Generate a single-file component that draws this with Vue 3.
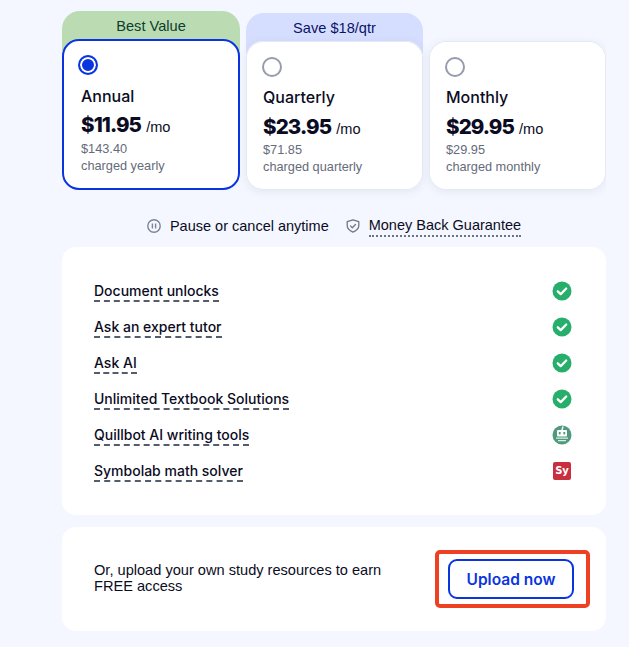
<template>
  <div class="page">
    <div class="plans">
      <div v-for="plan in plans" :key="plan.name" class="plan" :class="{ selected: plan.selected }">
        <div v-if="plan.banner" class="banner" :class="plan.bannerClass">{{ plan.banner }}</div>
        <div class="card">
          <span class="radio"></span>
          <div class="name">{{ plan.name }}</div>
          <div class="price"><b>{{ plan.price }}</b> <span>/mo</span></div>
          <div class="total">{{ plan.total }}</div>
          <div class="charged">{{ plan.charged }}</div>
        </div>
      </div>
    </div>

    <div class="notes">
      <svg class="note-icon" viewBox="0 0 14 14" fill="none" stroke="#7b8494" stroke-width="1.4">
        <circle cx="7" cy="7" r="6.2" />
        <path d="M5.4 4.6v4.8M8.6 4.6v4.8" />
      </svg>
      <span class="note-text">Pause or cancel anytime</span>
      <svg class="note-icon shield" viewBox="0 0 14 14" fill="none" stroke="#6f7785" stroke-width="1.3" stroke-linejoin="round" stroke-linecap="round">
        <path d="M7 .9l5.8 1.8v3.800c0 3.100-2.500 5.200-5.800 6.600-3.300-1.400-5.800-3.500-5.800-6.600V2.700z" />
        <path d="M4.500 6.900l1.800 1.800 3.200-3.200" />
      </svg>
      <span class="note-text dotted">Money Back Guarantee</span>
    </div>

    <div class="panel features">
      <div v-for="item in features" :key="item.label" class="feature">
        <span class="feature-label">{{ item.label }}</span>
        <svg v-if="item.icon === 'check'" class="feature-icon" viewBox="0 0 20 20">
          <circle cx="10" cy="10" r="9.5" fill="#27ae6b" />
          <path d="M5.800 10.300l2.900 2.800 5.500-5.600" fill="none" stroke="#fff" stroke-width="2.300" stroke-linecap="round" stroke-linejoin="round" />
        </svg>
        <svg v-else-if="item.icon === 'bot'" class="feature-icon" viewBox="0 0 20 20">
          <circle cx="10" cy="10" r="9.500" fill="#4f9a7c" />
          <path d="M11 1.500L10 5" stroke="#fff" stroke-width="1.400" />
          <rect x="5" y="5" width="10" height="6.500" rx="1" fill="#fff" />
          <rect x="6.800" y="7" width="1.800" height="2.400" fill="#4f9a7c" />
          <rect x="11.400" y="7" width="1.800" height="2.400" fill="#4f9a7c" />
          <path d="M4 13.200h12M6 15.600h8" stroke="#dcefe6" stroke-width="1.300" />
        </svg>
        <span v-else class="sy">Sy</span>
      </div>
    </div>

    <div class="panel upload">
      <p>Or, upload your own study resources to earn FREE access</p>
      <div class="upload-action">
        <button class="upload-btn">Upload now</button>
        <span class="highlight"></span>
      </div>
    </div>
  </div>
</template>

<script setup>
const plans = [
  { name: 'Annual', price: '$11.95', total: '$143.40', charged: 'charged yearly', banner: 'Best Value', bannerClass: 'green', selected: true },
  { name: 'Quarterly', price: '$23.95', total: '$71.85', charged: 'charged quarterly', banner: 'Save $18/qtr', bannerClass: 'blue' },
  { name: 'Monthly', price: '$29.95', total: '$29.95', charged: 'charged monthly' },
];

const features = [
  { label: 'Document unlocks', icon: 'check' },
  { label: 'Ask an expert tutor', icon: 'check' },
  { label: 'Ask AI', icon: 'check' },
  { label: 'Unlimited Textbook Solutions', icon: 'check' },
  { label: 'Quillbot AI writing tools', icon: 'bot' },
  { label: 'Symbolab math solver', icon: 'sy' },
];
</script>

<style>
html, body {
  background: #f4f7ff;
}
</style>

<style scoped>
.page {
  width: 544px;
  height: 647px;
  box-sizing: border-box;
  margin-left: 62px;
  padding-top: 11px;
  font-family: "Liberation Sans", Arial, sans-serif;
  color: #0b0c24;
  overflow: hidden;
}

.plans {
  display: flex;
  align-items: flex-end;
  gap: 6px;
  height: 179px;
}

.plan {
  flex: 0 0 177px;
  display: flex;
  flex-direction: column;
}

.plan.selected {
  flex-basis: 178px;
}

.banner {
  height: 40px;
  margin-bottom: -12px;
  padding-top: 6px;
  box-sizing: border-box;
  border-radius: 18px 18px 0 0;
  text-align: center;
  font-size: 14.6px;
  line-height: 18px;
}

.green {
  background: #bbdcb3;
  color: #0c3d2e;
}

.blue {
  background: #d6deff;
  color: #0b1466;
  height: 41px;
  margin-bottom: -13px;
}

.card {
  position: relative;
  height: 149px;
  box-sizing: border-box;
  padding: 16px 17px 0;
  background: #fff;
  border-radius: 17px;
  box-shadow: inset 0 0 0 1px #e6e9f3, 0 2px 10px rgba(60, 75, 130, 0.09);
}

.selected .card {
  height: 151px;
  padding-top: 14px;
  border: 2px solid #0a34e0;
  box-shadow: none;
}

.radio {
  display: block;
  width: 20px;
  height: 20px;
  margin-left: -1px;
  box-sizing: border-box;
  border: 2px solid #959cab;
  border-radius: 50%;
}

.selected .radio {
  margin-left: -3px;
  border-color: #0a34e0;
  background: #0a34e0;
  box-shadow: inset 0 0 0 2px #fff;
}

.name {
  margin-top: 10px;
  font-family: Inter, "Liberation Sans", sans-serif;
  font-size: 16px;
  font-weight: 500;
  line-height: 20px;
}

.selected .name {
  margin-top: 11px;
}

.price {
  margin-top: 8px;
  font-size: 14.6px;
  line-height: 24px;
  white-space: nowrap;
}

.selected .price {
  margin-top: 7px;
}

.price b {
  font-family: Inter, "Liberation Sans", sans-serif;
  font-size: 20.5px;
  font-weight: 800;
  letter-spacing: -0.9px;
  margin-right: 1px;
}

.total,
.charged {
  font-size: 12.75px;
  line-height: 17px;
  color: #646b7a;
}

.selected .total {
  margin-top: 1px;
}

.notes {
  display: flex;
  align-items: center;
  justify-content: center;
  height: 22px;
  margin-top: 25px;
  font-size: 14.5px;
}

.note-icon {
  width: 14px;
  height: 14px;
  margin-right: 9px;
}

.shield {
  margin-left: 17px;
  margin-right: 9px;
}

.note-text {
  line-height: 19px;
}

.dotted {
  border-bottom: 2px dotted #6c7380;
}

.panel {
  background: #fff;
  border-radius: 14px;
}

.features {
  box-sizing: border-box;
  height: 268px;
  margin-top: 10px;
  padding: 27px 32px 0;
}

.feature {
  display: flex;
  align-items: center;
  justify-content: space-between;
  height: 36px;
}

.feature-label {
  font-family: Inter, "Liberation Sans", sans-serif;
  font-size: 14px;
  font-weight: 500;
  line-height: 18px;
  border-bottom: 2px dashed #555c6b;
}

.feature-icon {
  width: 20px;
  height: 20px;
  margin-right: 2px;
  margin-bottom: 2px;
}

.sy {
  width: 18px;
  height: 18px;
  margin-right: 3px;
  margin-bottom: 2px;
  border-radius: 2px;
  background: #c9303f;
  color: #fff;
  font-family: "DejaVu Sans", sans-serif;
  font-size: 10px;
  font-weight: 700;
  line-height: 18px;
  text-align: center;
}

.upload {
  display: flex;
  align-items: center;
  justify-content: space-between;
  box-sizing: border-box;
  height: 104px;
  margin-top: 12px;
  padding: 0 32px;
}

.upload p {
  width: 300px;
  margin: 0 0 2px;
  font-size: 14.6px;
  line-height: 16px;
}

.upload-action {
  position: relative;
}

.upload-btn {
  display: block;
  width: 126px;
  height: 40px;
  box-sizing: border-box;
  border: 2px solid #0a34e0;
  border-radius: 9px;
  background: #fff;
  color: #0a34e0;
  font-family: Inter, "Liberation Sans", sans-serif;
  font-size: 15.5px;
  font-weight: 600;
}

.highlight {
  position: absolute;
  left: -13px;
  top: -9px;
  width: 155px;
  height: 58px;
  box-sizing: border-box;
  border: 4px solid #ee4023;
  border-radius: 5px;
}
</style>
